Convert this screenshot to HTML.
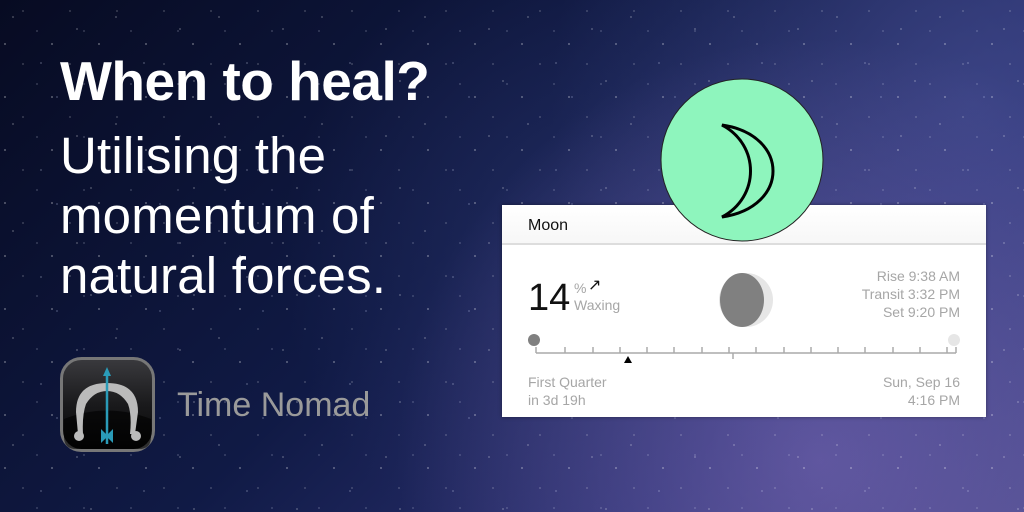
<!DOCTYPE html>
<html><head><style>
*{margin:0;padding:0;box-sizing:border-box}
body{width:1024px;height:512px;overflow:hidden;position:relative;font-family:"Liberation Sans",sans-serif;
background:
radial-gradient(circle at 80% 90%, rgba(130,110,190,.55), transparent 45%),
radial-gradient(circle at 95% 20%, rgba(80,90,160,.5), transparent 40%),
radial-gradient(circle at 60% 50%, rgba(50,60,120,.5), transparent 50%),
linear-gradient(135deg,#070b22 0%,#101a45 45%,#2a3070 75%,#4a4a8a 100%);}
.stars{position:absolute;inset:0;
background-image:
radial-gradient(1.2px 1.2px at 13px 17px,#fff 50%,transparent 60%),
radial-gradient(1px 1px at 41px 63px,#dfe6ff 50%,transparent 60%),
radial-gradient(1px 1px at 77px 29px,#fff 50%,transparent 60%),
radial-gradient(1.3px 1.3px at 91px 81px,#fff 50%,transparent 60%),
radial-gradient(1px 1px at 57px 97px,#cfd8ff 50%,transparent 60%);
background-size:103px 107px;opacity:.75}
.stars2{position:absolute;inset:0;
background-image:
radial-gradient(1px 1px at 23px 11px,#fff 50%,transparent 60%),
radial-gradient(1.4px 1.4px at 5px 44px,#fff 50%,transparent 60%),
radial-gradient(1px 1px at 37px 31px,#e8ecff 50%,transparent 60%);
background-size:47px 53px;opacity:.6}
.h{position:absolute;left:60px;color:#fff;white-space:nowrap}
.card{position:absolute;left:502px;top:205px;width:484px;height:212px;background:#fff;box-shadow:0 0 4px rgba(0,0,0,.4)}
.hdr{height:40px;background:linear-gradient(#fff,#f7f7f7);border-bottom:2px solid #ddd;font-size:16px;color:#111;padding:12px 0 0 26px}
.g{color:#a6a6a6}
.t{position:absolute;font-size:14px;line-height:18px}
</style></head><body>
<div class="stars"></div><div class="stars2"></div>
<div class="h" style="top:54px;font-weight:bold;font-size:55px;line-height:55px;letter-spacing:-0.5px">When to heal?</div>
<div class="h" style="top:126px;font-size:51px;line-height:60px;letter-spacing:0.2px">Utilising the<br>momentum of<br>natural forces.</div>

<svg style="position:absolute;left:60px;top:357px" width="95" height="95" viewBox="0 0 95 95">
<defs><linearGradient id="ig" x1="0" y1="0" x2="0" y2="1"><stop offset="0" stop-color="#3a3a3e"/><stop offset=".5" stop-color="#1a1a1c"/><stop offset="1" stop-color="#050505"/></linearGradient></defs>
<rect x="1.5" y="1.5" width="92" height="92" rx="20" fill="url(#ig)" stroke="#777" stroke-width="3"/>
<path d="M4 62 Q47 45 91 62 L91 80 Q91 92 79 92 L16 92 Q4 92 4 80Z" fill="#000" opacity=".6"/>
<path d="M18 77 L16 55 Q16 26 47 26 Q78 26 78 55 L75 77 L70 77 Q72 58 68 47 Q60 34 47 34 Q34 34 26 47 Q22 58 23 77Z" fill="#bbb"/>
<circle cx="19" cy="79" r="5" fill="#bbb"/><circle cx="76" cy="79" r="5" fill="#bbb"/>
<line x1="47" y1="14" x2="47" y2="87" stroke="#2a9bb8" stroke-width="2.5"/>
<path d="M47 10 L51 19 L43 19Z" fill="#2a9bb8"/>
<path d="M41 72 L47 78 L53 72 L53 86 L47 80 L41 86Z" fill="#2a9bb8"/>
</svg>
<div style="position:absolute;left:177px;top:386px;color:#9a9a9a;font-size:34px">Time Nomad</div>

<div class="card">
<div class="hdr">Moon</div>
<div style="position:absolute;left:26px;top:72px;font-size:38px;color:#111;font-weight:300">14</div>
<div class="t g" style="left:72px;top:74px">%</div>
<div class="t" style="left:86px;top:72px;font-size:16px;color:#111">↗</div>
<div class="t g" style="left:72px;top:91px">Waxing</div>
<svg style="position:absolute;left:215px;top:67px" width="58" height="56"><circle cx="29" cy="28" r="27" fill="#e6e6e6"/><ellipse cx="25" cy="28" rx="22" ry="27" fill="#808080"/></svg>
<div class="t g" style="right:26px;top:62px;text-align:right">Rise 9:38 AM<br>Transit 3:32 PM<br>Set 9:20 PM</div>
<svg style="position:absolute;left:24px;top:128px" width="440" height="34">
<circle cx="8" cy="7" r="6" fill="#808080"/><circle cx="428" cy="7" r="6" fill="#e6e6e6"/>
<line x1="10" y1="20" x2="430" y2="20" stroke="#aaa" stroke-width="1.5"/>
<g stroke="#aaa" stroke-width="1.5">
<line x1="10" y1="14" x2="10" y2="20"/><line x1="39" y1="14" x2="39" y2="20"/><line x1="67" y1="14" x2="67" y2="20"/><line x1="94" y1="14" x2="94" y2="20"/><line x1="121" y1="14" x2="121" y2="20"/><line x1="148" y1="14" x2="148" y2="20"/><line x1="176" y1="14" x2="176" y2="20"/><line x1="203" y1="14" x2="203" y2="20"/><line x1="207" y1="20" x2="207" y2="26"/><line x1="230" y1="14" x2="230" y2="20"/><line x1="258" y1="14" x2="258" y2="20"/><line x1="285" y1="14" x2="285" y2="20"/><line x1="312" y1="14" x2="312" y2="20"/><line x1="339" y1="14" x2="339" y2="20"/><line x1="367" y1="14" x2="367" y2="20"/><line x1="394" y1="14" x2="394" y2="20"/><line x1="421" y1="14" x2="421" y2="20"/><line x1="430" y1="14" x2="430" y2="20"/></g>
<path d="M102 23 L106 30 L98 30Z" fill="#000"/>
</svg>
<div class="t g" style="left:26px;top:168px">First Quarter<br>in 3d 19h</div>
<div class="t g" style="right:26px;top:168px;text-align:right">Sun, Sep 16<br>4:16 PM</div>
</div>

<svg style="position:absolute;left:659px;top:77px" width="166" height="168">
<circle cx="83" cy="83" r="81" fill="#8ef5bd" stroke="#222" stroke-width="1"/>
<path d="M63 48 C131 58 131 130 63 140 C101 120 101 68 63 48Z" fill="none" stroke="#000" stroke-width="3" stroke-linejoin="miter"/>
</svg>
</body></html>
